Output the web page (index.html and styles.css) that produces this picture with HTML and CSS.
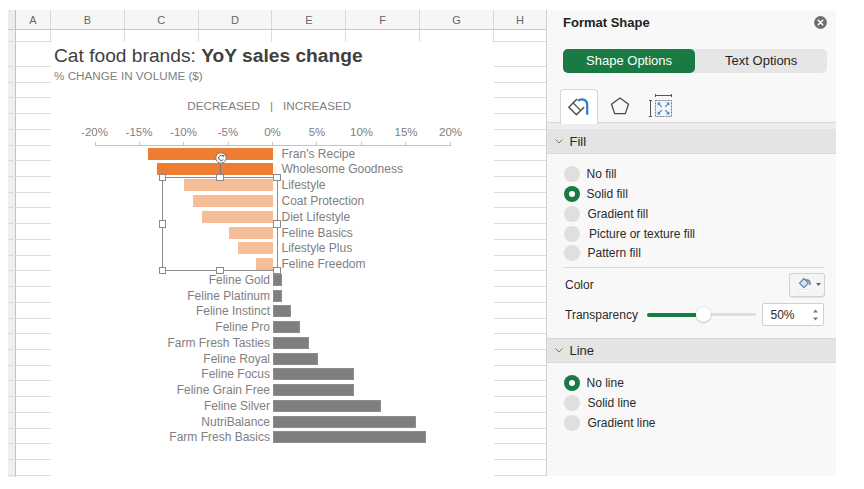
FILE: index.html
```html
<!DOCTYPE html>
<html>
<head>
<meta charset="utf-8">
<title>Format Shape</title>
<link rel="stylesheet" href="styles.css">
</head>
<body>
<div class="frame">
  <section class="sheet">
    <div class="colhead">
      <div class="ch rh"></div>
      <div class="ch ca">A</div>
      <div class="ch cm">B</div>
      <div class="ch cm">C</div>
      <div class="ch cm">D</div>
      <div class="ch cm">E</div>
      <div class="ch cm">F</div>
      <div class="ch cm">G</div>
      <div class="ch chh">H</div>
    </div>
    <div class="sbody">
      <div class="colA">
        <div class="r1 edge"></div><div class="r2"></div>
        <div class="r"></div><div class="r"></div><div class="r"></div><div class="r"></div><div class="r"></div><div class="r"></div><div class="r"></div><div class="r"></div><div class="r"></div><div class="r"></div><div class="r"></div><div class="r"></div><div class="r"></div>
        <div class="r"></div><div class="r"></div><div class="r"></div><div class="r"></div><div class="r"></div><div class="r"></div><div class="r"></div><div class="r"></div><div class="r"></div><div class="r"></div><div class="r"></div><div class="r"></div><div class="r"></div>
      </div>
      <div class="mid">
        <div class="stubs"><div></div><div></div><div></div><div></div><div></div><div></div></div>
        <div class="chart">
          <h1 class="title">Cat food brands: <b>YoY sales change</b></h1>
          <p class="sub">% CHANGE IN VOLUME ($)</p>
          <p class="legend"><span class="dl">DECREASED</span><span class="sep">|</span><span>INCREASED</span></p>
          <div class="axlabels"><span>-20%</span><span>-15%</span><span>-10%</span><span>-5%</span><span>0%</span><span>5%</span><span>10%</span><span>15%</span><span>20%</span></div>
          <div class="axis"><i></i><i></i><i></i><i></i><i></i><i></i><i></i><i></i></div>
          <div class="bars">
            <div class="row"><div class="lside"><div class="bar dark" style="width:125px"></div></div><div class="rside"><span class="rlab">Fran's Recipe</span></div></div>
            <div class="row"><div class="lside"><div class="bar dark" style="width:116px"></div></div><div class="rside"><span class="rlab">Wholesome Goodness</span></div></div>
            <div class="row"><div class="lside"><div class="bar light" style="width:89px"></div></div><div class="rside"><span class="rlab">Lifestyle</span></div></div>
            <div class="row"><div class="lside"><div class="bar light" style="width:80px"></div></div><div class="rside"><span class="rlab">Coat Protection</span></div></div>
            <div class="row"><div class="lside"><div class="bar light" style="width:71px"></div></div><div class="rside"><span class="rlab">Diet Lifestyle</span></div></div>
            <div class="row"><div class="lside"><div class="bar light" style="width:44px"></div></div><div class="rside"><span class="rlab">Feline Basics</span></div></div>
            <div class="row"><div class="lside"><div class="bar light" style="width:35px"></div></div><div class="rside"><span class="rlab">Lifestyle Plus</span></div></div>
            <div class="row"><div class="lside"><div class="bar light" style="width:17px"></div></div><div class="rside"><span class="rlab">Feline Freedom</span></div></div>
            <div class="row"><div class="lside"><span class="llab">Feline Gold</span></div><div class="rside"><div class="bar grey" style="width:9px"></div></div></div>
            <div class="row"><div class="lside"><span class="llab">Feline Platinum</span></div><div class="rside"><div class="bar grey" style="width:9px"></div></div></div>
            <div class="row"><div class="lside"><span class="llab">Feline Instinct</span></div><div class="rside"><div class="bar grey" style="width:17.5px"></div></div></div>
            <div class="row"><div class="lside"><span class="llab">Feline Pro</span></div><div class="rside"><div class="bar grey" style="width:27px"></div></div></div>
            <div class="row"><div class="lside"><span class="llab">Farm Fresh Tasties</span></div><div class="rside"><div class="bar grey" style="width:36px"></div></div></div>
            <div class="row"><div class="lside"><span class="llab">Feline Royal</span></div><div class="rside"><div class="bar grey" style="width:45px"></div></div></div>
            <div class="row"><div class="lside"><span class="llab">Feline Focus</span></div><div class="rside"><div class="bar grey" style="width:80.5px"></div></div></div>
            <div class="row"><div class="lside"><span class="llab">Feline Grain Free</span></div><div class="rside"><div class="bar grey" style="width:80.5px"></div></div></div>
            <div class="row"><div class="lside"><span class="llab">Feline Silver</span></div><div class="rside"><div class="bar grey" style="width:108px"></div></div></div>
            <div class="row"><div class="lside"><span class="llab">NutriBalance</span></div><div class="rside"><div class="bar grey" style="width:143px"></div></div></div>
            <div class="row"><div class="lside"><span class="llab">Farm Fresh Basics</span></div><div class="rside"><div class="bar grey" style="width:152.5px"></div></div></div>
          </div>
          <div class="sel">
            <span class="stem"></span>
            <svg class="rot" viewBox="0 0 12 12" width="12" height="12">
              <circle cx="6" cy="6" r="5.2" fill="#fff" stroke="#7a7a7a" stroke-width="1"/>
              <path d="M8.2 4.3 A2.6 2.6 0 1 0 8.3 7.6" fill="none" stroke="#555" stroke-width="1"/>
              <path d="M7.2 3.4 L8.6 4.4 L8.9 2.8" fill="none" stroke="#555" stroke-width="0.9"/>
            </svg>
            <i class="h tl"></i><i class="h tm"></i><i class="h tr"></i>
            <i class="h ml"></i><i class="h mr"></i>
            <i class="h bl"></i><i class="h bm"></i><i class="h br"></i>
          </div>
        </div>
      </div>
      <div class="colH">
        <div class="r1"></div><div class="r2"></div>
        <div class="r"></div><div class="r"></div><div class="r"></div><div class="r"></div><div class="r"></div><div class="r"></div><div class="r"></div><div class="r"></div><div class="r"></div><div class="r"></div><div class="r"></div><div class="r"></div><div class="r"></div>
        <div class="r"></div><div class="r"></div><div class="r"></div><div class="r"></div><div class="r"></div><div class="r"></div><div class="r"></div><div class="r"></div><div class="r"></div><div class="r"></div><div class="r"></div><div class="r"></div><div class="r"></div>
      </div>
    </div>
  </section>

  <aside class="panel">
    <div class="ph">
      <span class="pt">Format Shape</span>
      <svg class="close" viewBox="0 0 13 13" width="13" height="13">
        <circle cx="6.5" cy="6.5" r="6.4" fill="#6f6f6f"/>
        <path d="M4.3 4.3 L8.7 8.7 M8.7 4.3 L4.3 8.7" stroke="#fff" stroke-width="1.5" stroke-linecap="round"/>
      </svg>
    </div>
    <div class="seg"><span class="on">Shape Options</span><span>Text Options</span></div>
    <div class="tabs">
      <div class="tab active">
        <svg viewBox="0 0 24 20" width="24" height="20">
          <path d="M10 2 L1.8 10.2 L9.4 17.8 L17.2 10" fill="none" stroke="#4a4a4a" stroke-width="1.4" stroke-linejoin="round"/>
          <path d="M6.2 6 L13.6 13.4" fill="none" stroke="#4a4a4a" stroke-width="1.2"/>
          <path d="M11.5 3.2 C16 1.2 20.2 3 20.2 8 L20.2 17" fill="none" stroke="#2f7ccc" stroke-width="2.2" stroke-linecap="round"/>
        </svg>
      </div>
      <div class="tab">
        <svg viewBox="0 0 20 18" width="20" height="18">
          <path d="M10 1 L18.5 7.2 L15.3 16.6 L4.7 16.6 L1.5 7.2 Z" fill="none" stroke="#4a4a4a" stroke-width="1.3" stroke-linejoin="round"/>
        </svg>
      </div>
      <div class="tab">
        <svg viewBox="0 0 24 24" width="24" height="24">
          <path d="M6.5 1.5 H22.5 M6.5 0 V3 M22.5 0 V3" stroke="#555" stroke-width="1"/>
          <path d="M1.5 6.5 V22.5 M0 6.5 H3 M0 22.5 H3" stroke="#555" stroke-width="1"/>
          <rect x="6.5" y="6.5" width="16" height="16" fill="#f2f6fa" stroke="#7a7a7a" stroke-width="1" stroke-dasharray="2 1"/>
          <path d="M12.8 12.8 L9.8 9.8 M16.2 12.8 L19.2 9.8 M12.8 16.2 L9.8 19.2 M16.2 16.2 L19.2 19.2" stroke="#3b86cf" stroke-width="1.2"/>
          <path d="M8.6 8.6 H11.8 L8.6 11.8 Z M20.4 8.6 H17.2 L20.4 11.8 Z M8.6 20.4 H11.8 L8.6 17.2 Z M20.4 20.4 H17.2 L20.4 17.2 Z" fill="#3b86cf"/>
        </svg>
      </div>
    </div>
    <div class="band"></div>
    <div class="sech">
      <svg class="chev" viewBox="0 0 8 5" width="8" height="5"><path d="M0.5 0.5 L4 4 L7.5 0.5" fill="none" stroke="#777" stroke-width="1"/></svg>
      <span>Fill</span>
    </div>
    <div class="secb">
      <ul class="radios">
        <li><span class="rd"></span><span class="rl">No fill</span></li>
        <li><span class="rd on"></span><span class="rl">Solid fill</span></li>
        <li><span class="rd"></span><span class="rl s1">Gradient fill</span></li>
        <li><span class="rd"></span><span class="rl s2">Picture or texture fill</span></li>
        <li><span class="rd"></span><span class="rl s1">Pattern fill</span></li>
      </ul>
      <div class="hr"></div>
      <div class="prop">
        <span class="plab">Color</span>
        <span class="cbtn">
          <svg viewBox="0 0 14 16" width="14" height="16">
            <path d="M6 1.5 L1.5 6.2 L6 10.6 L10.4 6.2 Z" fill="#d9e4f0" stroke="#5b7ea6" stroke-width="1.1" stroke-linejoin="round"/>
            <path d="M8.3 3 C11 2.6 12.3 4.5 12 7.5" fill="none" stroke="#5b7ea6" stroke-width="1.4" stroke-linecap="round"/>
            <rect x="1" y="12.5" width="12" height="2.4" fill="#fff" stroke="#e3e3e3" stroke-width="0.6"/>
          </svg>
          <svg class="caret" viewBox="0 0 5 3" width="5" height="3"><path d="M0 0 H5 L2.5 3 Z" fill="#666"/></svg>
        </span>
      </div>
      <div class="prop">
        <span class="plab tw">Transparency</span>
        <span class="slider"><span class="fillbar"></span><span class="knob"></span></span>
        <span class="num">50%
          <svg class="spin" viewBox="0 0 5 12" width="5" height="12"><path d="M0 3.5 L2.5 0.5 L5 3.5 Z M0 8.5 L2.5 11.5 L5 8.5 Z" fill="#777"/></svg>
        </span>
      </div>
    </div>
    <div class="sech line">
      <svg class="chev" viewBox="0 0 8 5" width="8" height="5"><path d="M0.5 0.5 L4 4 L7.5 0.5" fill="none" stroke="#777" stroke-width="1"/></svg>
      <span>Line</span>
    </div>
    <ul class="radios">
      <li><span class="rd on"></span><span class="rl">No line</span></li>
      <li><span class="rd"></span><span class="rl s1">Solid line</span></li>
      <li><span class="rd"></span><span class="rl s1">Gradient line</span></li>
    </ul>
  </aside>
</div>
</body>
</html>
```

FILE: styles.css
```css
* { box-sizing: border-box; margin: 0; padding: 0; }
body { background: #fff; font-family: "Liberation Sans", Arial, sans-serif; }

.frame { display: flex; margin: 10px 0 0 8px; width: 828px; height: 467px; }

/* spreadsheet */
.sheet { width: 538px; display: flex; flex-direction: column; }
.colhead { display: flex; height: 20px; background: #f6f6f6; border-bottom: 1px solid #c9c9c9; }
.ch { display: flex; align-items: center; justify-content: center; font-size: 11px; color: #666; border-right: 1px solid #d8d8d8; }
.ch.rh { width: 8px; background: #ececec; border-right-color: #bdbdbd; }
.ch.ca { width: 35px; }
.ch.cm { width: 73.83px; }
.ch.chh { width: 52px; border-right: none; }

.sbody { display: flex; flex: 1; }
.colA { width: 43px; background: linear-gradient(to right, #f0f0f0 0 7px, #c4c4c4 7px 8px, transparent 8px); }
.colH { width: 52px; }
.r1, .r2, .r { border-bottom: 1px solid #dcdcdc; }
.r1 { height: 12px; }
.r1.edge { border-right: 1px solid #dcdcdc; }
.r2 { height: 25px; }
.r { height: 15.73px; }

.mid { width: 443px; display: flex; flex-direction: column; }
.stubs { display: flex; height: 12px; }
.stubs div { width: 73.83px; border-right: 1px solid #dcdcdc; }
.chart { flex: 1; background: #fff; position: relative; color: #808080; }

.title { font-size: 19.2px; line-height: 21px; font-weight: normal; color: #404040; margin: 3px 0 0 3px; }
.title b { font-weight: bold; }
.sub { font-size: 11.7px; line-height: 14px; margin: 2.6px 0 0 3px; }
.legend { display: flex; font-size: 11.7px; line-height: 14px; margin-top: 16.5px; }
.legend .dl { width: 209px; text-align: right; }
.legend .sep { width: 23px; text-align: center; }

.axlabels { display: flex; margin: 12.4px 0 0 21.25px; font-size: 11.5px; line-height: 14px; }
.axlabels span { width: 44.5px; text-align: center; }
.axis { display: flex; margin: 3px 0 0 43.5px; width: 356px; height: 4px; border-bottom: 1px solid #c4c4c4; border-right: 1px solid #c4c4c4; }
.axis i { width: 44.5px; border-left: 1px solid #c4c4c4; }

.bars { margin-top: -0.7px; }
.row { display: flex; height: 15.78px; align-items: center; font-size: 12px; }
.lside { width: 222px; display: flex; justify-content: flex-end; align-items: center; height: 100%; }
.rside { flex: 1; display: flex; align-items: center; height: 100%; }
.bar { height: 12px; }
.bar.dark { background: #ed7d31; }
.bar.light { background: #f6be98; }
.bar.grey { background: #7f7f7f; box-shadow: inset 0 0 0 1px #8e8e8e; }
.rlab { padding-left: 8.5px; white-space: nowrap; }
.llab { padding-right: 3px; white-space: nowrap; }

/* selection overlay */
.sel { position: absolute; left: 111px; top: 135px; width: 115.5px; height: 94px; border: 1.3px solid #8c8c8c; }
.sel .stem { position: absolute; left: 57px; top: -16px; width: 1px; height: 16px; background: #7a7a7a; }
.sel .rot { position: absolute; left: 51.5px; top: -26.5px; }
.h { position: absolute; width: 7.5px; height: 7.5px; background: #fff; border: 1px solid #8a8a8a; }
.h.tl { left: -4.4px; top: -4.4px; }
.h.tm { left: calc(50% - 3.6px); top: -4.4px; }
.h.tr { right: -4.4px; top: -4.4px; }
.h.ml { left: -4.4px; top: calc(50% - 3.6px); }
.h.mr { right: -4.4px; top: calc(50% - 3.6px); }
.h.bl { left: -4.4px; bottom: -4.4px; }
.h.bm { left: calc(50% - 3.6px); bottom: -4.4px; }
.h.br { right: -4.4px; bottom: -4.4px; }

/* format panel */
.panel { width: 290px; height: 466px; background: #f8f8f8; border-left: 1px solid #d0d0d0; color: #2a2a2a; }
.ph { display: flex; align-items: center; justify-content: space-between; height: 25px; padding: 0 9.5px 0 16px; }
.pt { font-size: 13px; font-weight: bold; color: #222; }
.close { display: block; }

.seg { display: flex; margin: 14.3px 0 0 16px; width: 264.3px; height: 23.4px; background: #e6e6e6; border-radius: 5px; font-size: 13px; }
.seg span { flex: 1; display: flex; align-items: center; justify-content: center; color: #262626; }
.seg span.on { background: #197b43; color: #fff; border-radius: 5px; }

.tabs { display: flex; gap: 2.7px; margin-top: 16.6px; height: 34px; padding-left: 12.7px; border-bottom: 1px solid #d6d6d6; }
.tab { width: 38.3px; display: flex; align-items: center; justify-content: center; }
.tab.active { background: #fff; border: 1px solid #d6d6d6; border-bottom: none; border-radius: 4px 4px 0 0; height: 35px; }
.tab svg { display: block; }

.band { height: 6px; background: #ededed; }
.sech { display: flex; align-items: center; height: 25px; padding-left: 8px; background: #e4e4e4; border-bottom: 1px solid #dadada; font-size: 13px; color: #2a2a2a; }
.sech.line { border-top: 1px solid #d6d6d6; }
.chev { margin-right: 6.5px; }

.radios { list-style: none; padding: 10.2px 0 0 16.5px; }
.radios li { display: flex; align-items: center; height: 19.75px; font-size: 12px; }
.rd { width: 16px; height: 16px; border-radius: 50%; background: #dfdfdf; display: flex; align-items: center; justify-content: center; }
.rd.on { background: #197b43; }
.rd.on::after { content: ""; width: 6px; height: 6px; border-radius: 50%; background: #fff; }
.rl { margin-left: 7px; }
.rl.s1 { margin-left: 8px; }
.rl.s2 { margin-left: 9.5px; }

.hr { height: 1px; background: #dcdcdc; margin: 4px 11px 0 16px; }
.prop { display: flex; align-items: center; height: 24px; margin-top: 4.5px; padding-left: 18px; font-size: 12px; }
.prop + .prop { margin-top: 6px; margin-bottom: 11.3px; }
.plab { flex: 1; }
.plab.tw { flex: none; width: 82px; }
.cbtn { width: 36px; height: 24px; margin-right: 11.3px; border: 1px solid #d2d2d2; border-radius: 3px; background: #f5f5f5; display: flex; align-items: center; padding-left: 8px; gap: 4px; box-shadow: 0 0.5px 1px rgba(0,0,0,0.08); }
.cbtn svg { display: block; }
.slider { position: relative; width: 109px; height: 3px; background: #dedede; border-radius: 2px; }
.fillbar { position: absolute; left: 0; top: -0.5px; width: 50px; height: 4px; background: #197b43; border-radius: 2px; }
.knob { position: absolute; left: 49.2px; top: -5.8px; width: 14.6px; height: 14.6px; border-radius: 50%; background: #fff; box-shadow: 0 0.5px 2px rgba(0,0,0,0.35); }
.num { position: relative; margin-left: 6px; width: 62.4px; height: 22.7px; background: #fff; border: 1px solid #cfcfcf; border-radius: 2px; display: flex; align-items: center; padding-left: 7.5px; }
.spin { position: absolute; right: 5px; top: 4.5px; }
```
